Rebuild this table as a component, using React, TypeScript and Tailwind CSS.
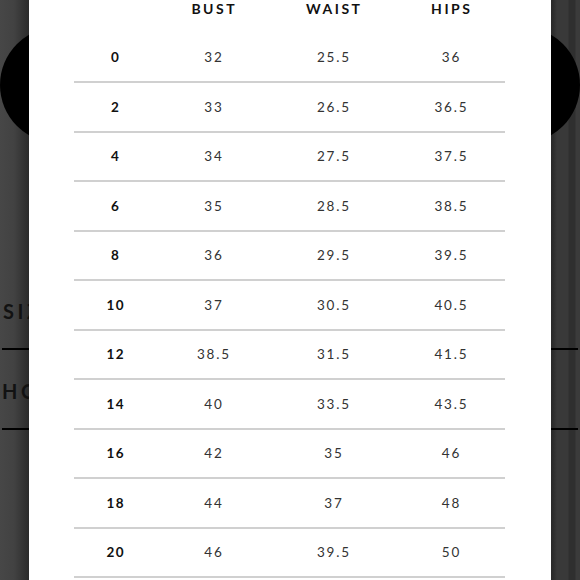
import React from "react";

const rows: [string, string, string, string][] = [
  ["0", "32", "25.5", "36"],
  ["2", "33", "26.5", "36.5"],
  ["4", "34", "27.5", "37.5"],
  ["6", "35", "28.5", "38.5"],
  ["8", "36", "29.5", "39.5"],
  ["10", "37", "30.5", "40.5"],
  ["12", "38.5", "31.5", "41.5"],
  ["14", "40", "33.5", "43.5"],
  ["16", "42", "35", "46"],
  ["18", "44", "37", "48"],
  ["20", "46", "39.5", "50"],
];

const grid = "grid grid-cols-[82px_114px_126px_109px] items-center";

function Header({ label }: { label: string }) {
  return (
    <div className="text-center text-[14px] font-bold tracking-[2.5px] text-[#111] pl-[2.5px]">{label}</div>
  );
}

export default function App() {
  return (
    <div
      className="w-[580px] h-[580px] overflow-hidden grid grid-cols-[29px_522px_29px] bg-[#2a2a2a]"
      style={{ fontFamily: "Lato, 'Open Sans', sans-serif" }}
    >
      {/* left strip of the page behind the overlay */}
      <div className="overflow-hidden flex flex-col bg-[linear-gradient(to_right,#474747_0px,#424242_14px,#2b2b2b_29px)]">
        <div className="mt-[27px] shrink-0 w-[116px] h-[116px] rounded-full bg-black" />
        <div className="mt-[155px] pl-[3px] pt-[3px] text-[20px] font-bold tracking-[3.5px] text-[#121212] leading-none whitespace-nowrap">
          SIZE
        </div>
        <div className="mt-[27px] ml-[2px] shrink-0 w-[30px] h-[2px] bg-black" />
        <div className="mt-[28px] pl-[2px] pt-[3px] text-[20px] font-bold tracking-[3.5px] text-[#121212] leading-none whitespace-nowrap">
          HOW
        </div>
        <div className="mt-[27px] ml-[2px] shrink-0 w-[30px] h-[2px] bg-black" />
      </div>

      {/* modal */}
      <div className="bg-white">
        <div className="ml-[45px] w-[431px] mt-[-16px]">
          <div className={`${grid} h-[49.5px]`}>
            <div />
            <Header label="BUST" />
            <Header label="WAIST" />
            <Header label="HIPS" />
          </div>
          {rows.map((r) => (
            <div key={r[0]} className={`${grid} h-[49.5px] border-b-2 border-[#d0d0d0]`}>
              <div className="text-center text-[13.5px] font-bold tracking-[1.5px] text-[#111] pl-[1.5px]">{r[0]}</div>
              <div className="text-center text-[13.5px] tracking-[1.8px] text-[#333] pl-[1.8px]">{r[1]}</div>
              <div className="text-center text-[13.5px] tracking-[1.8px] text-[#333] pl-[1.8px]">{r[2]}</div>
              <div className="text-center text-[13.5px] tracking-[1.8px] text-[#333] pl-[1.8px]">{r[3]}</div>
            </div>
          ))}
        </div>
      </div>

      {/* right strip of the page behind the overlay */}
      <div className="overflow-hidden flex flex-col bg-[linear-gradient(to_right,#2a2a2a_0px,#2c2c2c_2px,#393939_6px,#393939_17px,#2f2f2f_18px,#2f2f2f_24px,#3b3b3b_25px)]">
        <div className="mt-[27px] ml-[-87px] shrink-0 w-[116px] h-[116px] rounded-full bg-black" />
        <div className="mt-[205px] ml-[-1px] shrink-0 w-[28px] h-[2px] bg-black" />
        <div className="mt-[78px] ml-[-1px] shrink-0 w-[28px] h-[2px] bg-black" />
      </div>
    </div>
  );
}
